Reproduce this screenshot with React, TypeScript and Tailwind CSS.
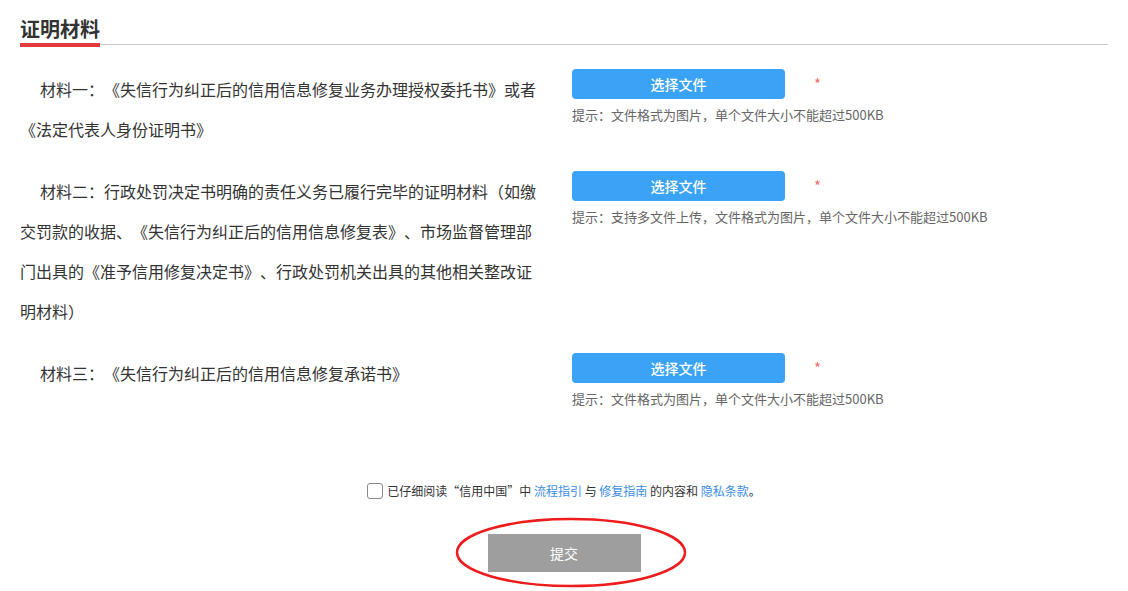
import React, { useState } from "react";

const materials = [
  {
    label: "材料一：《失信行为纠正后的信用信息修复业务办理授权委托书》或者《法定代表人身份证明书》",
    hint: "提示：文件格式为图片，单个文件大小不能超过500KB",
  },
  {
    label:
      "材料二：行政处罚决定书明确的责任义务已履行完毕的证明材料（如缴交罚款的收据、《失信行为纠正后的信用信息修复表》、市场监督管理部门出具的《准予信用修复决定书》、行政处罚机关出具的其他相关整改证明材料）",
    hint: "提示：支持多文件上传，文件格式为图片，单个文件大小不能超过500KB",
  },
  {
    label: "材料三：《失信行为纠正后的信用信息修复承诺书》",
    hint: "提示：文件格式为图片，单个文件大小不能超过500KB",
  },
];

const App: React.FC = () => {
  const [agreed, setAgreed] = useState(false);

  return (
    <div className="min-h-screen bg-white px-5 pt-[15px] font-['Microsoft_YaHei','Noto_Sans_CJK_SC',sans-serif] text-[#333] [text-spacing-trim:space-all]">
      {/* heading */}
      <div className="flex border-b border-[#c8c8c8]">
        <span className="-mb-[3px] border-b-4 border-[#e03a3a] text-[20px] font-bold leading-[28px] text-[#333]">
          证明材料
        </span>
      </div>

      <div className="mt-[24px]">
        {materials.map((m, i) => (
          <div key={i} className="mb-[22px] flex">
            <div className="w-[520px] indent-[20px] text-[16px] leading-[40px]">{m.label}</div>
            <div className="ml-[32px]">
              <div className="flex items-center">
                <button className="h-[30px] w-[213px] rounded-[4px] bg-[#3aa3f5] text-[14px] font-medium text-white">
                  选择文件
                </button>
                <span className="ml-[29px] -mt-[2px] text-[15px] leading-none text-[#f07070]">*</span>
              </div>
              <div className="mt-[8px] text-[13px] leading-[16px] text-[#666]">{m.hint}</div>
            </div>
          </div>
        ))}
      </div>

      {/* agreement */}
      <div className="mt-[74px] flex h-[20px] items-center justify-center text-[12px]">
        <button
          onClick={() => setAgreed(!agreed)}
          className="mr-[4px] flex h-[16px] w-[16px] items-center justify-center rounded-[3px] border border-[#8a8a8a] bg-white"
        >
          {agreed && (
            <svg viewBox="0 0 16 16" className="h-3 w-3">
              <path d="M3 8l3 3 7-7" fill="none" stroke="#3a8ee6" strokeWidth="2" />
            </svg>
          )}
        </button>
        <span>
          已仔细阅读“信用中国”中 <a className="text-[#3a8ee6]">流程指引</a> 与{" "}
          <a className="text-[#3a8ee6]">修复指南</a> 的内容和 <a className="text-[#3a8ee6]">隐私条款</a>。
        </span>
      </div>

      {/* submit */}
      <div className="mt-[33px] flex justify-center">
        <div className="relative">
          <button className="h-[38px] w-[153px] bg-[#9e9e9e] text-[14px] text-white">提交</button>
          <svg
            className="pointer-events-none absolute left-[-33px] top-[-17px] h-[71px] w-[232px]"
            viewBox="0 0 232 71"
          >
            <ellipse cx="116" cy="35.5" rx="114" ry="33.5" fill="none" stroke="#ee1c1c" strokeWidth="2.5" />
          </svg>
        </div>
      </div>
    </div>
  );
};

export default App;
